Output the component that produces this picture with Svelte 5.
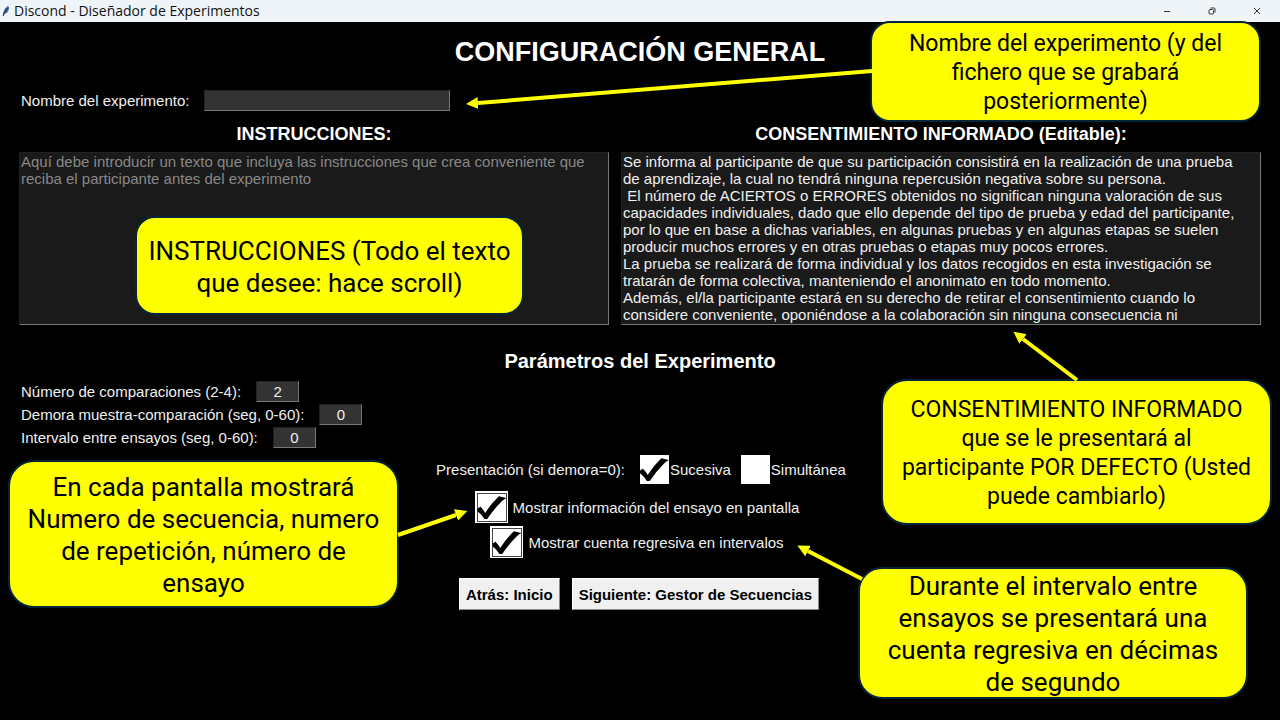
<script>
  let nombre = $state('');
  let instrucciones = $state('');
  let consentimiento = $state(
    [
      'Se informa al participante de que su participación consistirá en la realización de una prueba de aprendizaje, la cual no tendrá ninguna repercusión negativa sobre su persona.',
      ' El número de ACIERTOS o ERRORES obtenidos no significan ninguna valoración de sus capacidades individuales, dado que ello depende del tipo de prueba y edad del participante, por lo que en base a dichas variables, en algunas pruebas y en algunas etapas se suelen producir muchos errores y en otras pruebas o etapas muy pocos errores.',
      'La prueba se realizará de forma individual y los datos recogidos en esta investigación se tratarán de forma colectiva, manteniendo el anonimato en todo momento.',
      'Además, el/la participante estará en su derecho de retirar el consentimiento cuando lo considere conveniente, oponiéndose a la colaboración sin ninguna consecuencia ni'
    ].join('\n')
  );

  let parametros = $state([
    { id: 'comparaciones', label: 'Número de comparaciones (2-4):', value: '2' },
    { id: 'demora', label: 'Demora muestra-comparación (seg, 0-60):', value: '0' },
    { id: 'intervalo', label: 'Intervalo entre ensayos (seg, 0-60):', value: '0' }
  ]);

  let sucesiva = $state(true);
  let simultanea = $state(false);
  let mostrarInfo = $state(true);
  let mostrarCuenta = $state(true);
</script>

{#snippet marca()}
  <svg class="mark" viewBox="0 0 28 28" aria-hidden="true">
    <path d="M0 15 L2.8 13.2 Q5.6 15.8 7.4 19.2 Q13 10.5 20.6 3.2 L27.8 4.8 Q25.5 6 23.5 8 Q15.5 16 9.4 25 H6.6 Q4 20.5 0 17.5 Z" />
  </svg>
{/snippet}

<div class="window">
  <header class="titlebar">
    <svg class="feather" viewBox="0 0 8 12" aria-hidden="true">
      <path d="M1 11 Q1 4 5.5 1.2 Q7.5 1 7 3.5 Q6 8 2.5 9 Z" fill="#3f6c9f" />
      <path d="M1 11 Q2.5 6 5.5 3" fill="none" stroke="#1c2c40" stroke-width="1" />
    </svg>
    <span class="caption">Discond - Diseñador de Experimentos</span>
    <div class="controls">
      <button type="button" aria-label="Minimizar">
        <svg viewBox="0 0 8 8"><path d="M1 4.5H7" /></svg>
      </button>
      <button type="button" aria-label="Restaurar">
        <svg viewBox="0 0 8 8"><rect x="1" y="2.5" width="4.5" height="4.5" rx="1" /><path d="M2.5 1H6Q7 1 7 2V5.5" /></svg>
      </button>
      <button type="button" aria-label="Cerrar">
        <svg viewBox="0 0 8 8"><path d="M1 1L7 7M7 1L1 7" /></svg>
      </button>
    </div>
  </header>

  <main>
    <h1>CONFIGURACIÓN GENERAL</h1>

    <div class="field name">
      <label for="nombre">Nombre del experimento:</label>
      <input id="nombre" type="text" bind:value={nombre} />
    </div>

    <div class="texts">
      <section>
        <h2><label for="instrucciones">INSTRUCCIONES:</label></h2>
        <textarea
          id="instrucciones"
          placeholder="Aquí debe introducir un texto que incluya las instrucciones que crea conveniente que reciba el participante antes del experimento"
          bind:value={instrucciones}
        ></textarea>
      </section>
      <section>
        <h2><label for="consentimiento">CONSENTIMIENTO INFORMADO (Editable):</label></h2>
        <textarea id="consentimiento" spellcheck="false" bind:value={consentimiento}></textarea>
      </section>
    </div>

    <h3>Parámetros del Experimento</h3>

    <div class="params">
      {#each parametros as p (p.id)}
        <div class="field">
          <label for={p.id}>{p.label}</label>
          <input id={p.id} class="number" type="text" inputmode="numeric" bind:value={p.value} />
        </div>
      {/each}
    </div>

    <div class="checks">
      <div class="row" role="group" aria-labelledby="presentacion">
        <span id="presentacion">Presentación (si demora=0):</span>
        <label class="check">
          <span class="box">
            <input type="checkbox" bind:checked={sucesiva} />
            {#if sucesiva}{@render marca()}{/if}
          </span>
          Sucesiva
        </label>
        <label class="check">
          <span class="box">
            <input type="checkbox" bind:checked={simultanea} />
            {#if simultanea}{@render marca()}{/if}
          </span>
          Simultánea
        </label>
      </div>
      <label class="check wide">
        <span class="box framed">
          <input type="checkbox" bind:checked={mostrarInfo} />
          {#if mostrarInfo}{@render marca()}{/if}
        </span>
        Mostrar información del ensayo en pantalla
      </label>
      <label class="check wide">
        <span class="box framed">
          <input type="checkbox" bind:checked={mostrarCuenta} />
          {#if mostrarCuenta}{@render marca()}{/if}
        </span>
        Mostrar cuenta regresiva en intervalos
      </label>
    </div>

    <nav>
      <button type="button">Atrás: Inicio</button>
      <button type="button">Siguiente: Gestor de Secuencias</button>
    </nav>
  </main>

  <aside class="note note-name">Nombre del experimento (y del<br />fichero que se grabará<br />posteriormente)</aside>
  <aside class="note large note-text">INSTRUCCIONES (Todo el texto<br />que desee: hace scroll)</aside>
  <aside class="note note-consent">CONSENTIMIENTO INFORMADO<br />que se le presentará al<br />participante POR DEFECTO (Usted<br />puede cambiarlo)</aside>
  <aside class="note large note-info">En cada pantalla mostrará<br />Numero de secuencia, numero<br />de repetición, número de<br />ensayo</aside>
  <aside class="note large note-count">Durante el intervalo entre<br />ensayos se presentará una<br />cuenta regresiva en décimas<br />de segundo</aside>

  <svg class="arrows" width="1280" height="720" viewBox="0 0 1280 720" aria-hidden="true">
    <defs>
      <marker id="tip" markerUnits="userSpaceOnUse" markerWidth="12" markerHeight="12" refX="0" refY="6" orient="auto">
        <path d="M0 0L12 6L0 12Z" fill="#ffff00" />
      </marker>
    </defs>
    <path d="M872 71L478 103" />
    <path d="M1077 380L1023 339" />
    <path d="M398 535L456 515" />
    <path d="M862 579L808 551" />
  </svg>
</div>

<style>
  :global(body) {
    margin: 0;
    background: #000;
  }

  .window {
    position: relative;
    min-height: 100vh;
    box-sizing: border-box;
    overflow: hidden;
    background: #000;
    color: #f0f0f0;
    font: 15px/17px 'Liberation Sans', Arial, sans-serif;
  }

  .titlebar {
    display: flex;
    align-items: center;
    height: 22px;
    padding-left: 2px;
    background: #eff4f9;
    color: #111;
    font: 14px/22px 'Open Sans', 'Noto Sans', sans-serif;
  }

  .feather {
    width: 8px;
    height: 12px;
    margin-right: 4px;
  }

  .controls {
    display: flex;
    margin-left: auto;
  }

  .controls button {
    display: grid;
    place-items: center;
    width: 45px;
    height: 22px;
    padding: 0 2px 0 0;
    border: 0;
    background: none;
  }

  .controls svg {
    width: 8px;
    height: 8px;
    fill: none;
    stroke: #333;
    stroke-width: 1;
  }

  main {
    padding: 13px 19px;
  }

  h1,
  h2,
  h3 {
    margin: 0;
    color: #fff;
    text-align: center;
  }

  h1 {
    font-size: 27px;
    line-height: 34px;
  }

  h2 {
    font-size: 18px;
    line-height: 20px;
    margin-bottom: 8px;
  }

  h3 {
    margin-top: 24px;
    font-size: 20px;
    line-height: 24px;
  }

  input,
  textarea {
    box-sizing: border-box;
    margin: 0;
    border: 1px solid #222;
    border-right-color: #777;
    border-bottom-color: #777;
    border-radius: 0;
    color: #f0f0f0;
    font: inherit;
    outline: none;
  }

  .field {
    display: flex;
    align-items: center;
    gap: 15px;
    padding-left: 2px;
  }

  .field input {
    width: 246px;
    height: 21px;
    padding: 0 2px;
    background: #333;
  }

  .field .number {
    width: 43px;
    text-align: center;
  }

  .name {
    margin-top: 21px;
  }

  .texts {
    display: grid;
    grid-template-columns: 590fr 640fr;
    gap: 12px;
    margin-top: 13px;
  }

  textarea {
    display: block;
    width: 100%;
    height: 173px;
    padding: 0 10px 0 1px;
    background: #1a1a1a;
    resize: none;
    overflow: hidden;
  }

  textarea::placeholder {
    color: #888;
    opacity: 1;
  }

  .params {
    display: grid;
    gap: 2px;
    margin-top: 8px;
  }

  .checks {
    display: flex;
    flex-direction: column;
    align-items: center;
    gap: 3px;
    margin-top: 7px;
  }

  .row {
    display: flex;
    align-items: center;
    gap: 10px;
    margin-bottom: 4px;
    padding-left: 2px;
  }

  .row > span {
    margin-right: 5px;
  }

  .check {
    display: flex;
    align-items: center;
    gap: 1px;
  }

  .check.wide {
    gap: 5px;
    padding-right: 6px;
  }

  .box {
    display: grid;
    box-sizing: border-box;
    width: 29px;
    height: 29px;
    background: #fff;
  }

  .box.framed {
    width: 33px;
    height: 32px;
    padding: 1px 0 0 1px;
    border: 1px solid #fff;
  }

  .box input,
  .mark {
    grid-area: 1 / 1;
    width: 100%;
    height: 100%;
  }

  .box input {
    appearance: none;
    border: 0;
    background: #fff;
  }

  .framed input {
    border: 1px solid #444;
  }

  .mark {
    pointer-events: none;
  }

  nav {
    display: flex;
    justify-content: center;
    gap: 12px;
    margin-top: 20px;
    padding-right: 2px;
  }

  nav button {
    height: 32px;
    padding: 0 6px;
    border: 1px solid #fff;
    border-right-color: #888;
    border-bottom-color: #888;
    background: #f0f0f0;
    color: #000;
    font: bold 15px/17px 'Liberation Sans', Arial, sans-serif;
  }

  .note {
    position: absolute;
    box-sizing: border-box;
    display: grid;
    place-content: center;
    padding-top: 2px;
    border: 2px solid #04263a;
    border-radius: 20px;
    background: #ffff00;
    color: #000;
    font: 23px/29px Roboto, sans-serif;
    text-align: center;
    white-space: nowrap;
  }

  .note.large {
    font-size: 26px;
    line-height: 32px;
  }

  .note-name {
    left: 870px;
    top: 21px;
    width: 391px;
    height: 101px;
  }

  .note-text {
    left: 135px;
    top: 216px;
    width: 389px;
    height: 99px;
  }

  .note-consent {
    left: 881px;
    top: 379px;
    width: 391px;
    height: 146px;
    border-radius: 26px;
  }

  .note-info {
    left: 8px;
    top: 460px;
    width: 391px;
    height: 148px;
    border-radius: 26px;
  }

  .note-count {
    left: 858px;
    top: 567px;
    width: 390px;
    height: 132px;
    border-radius: 24px;
  }

  .arrows {
    position: absolute;
    left: 0;
    top: 0;
    pointer-events: none;
  }

  .arrows > path {
    fill: none;
    stroke: #ffff00;
    stroke-width: 4;
    marker-end: url(#tip);
  }
</style>
